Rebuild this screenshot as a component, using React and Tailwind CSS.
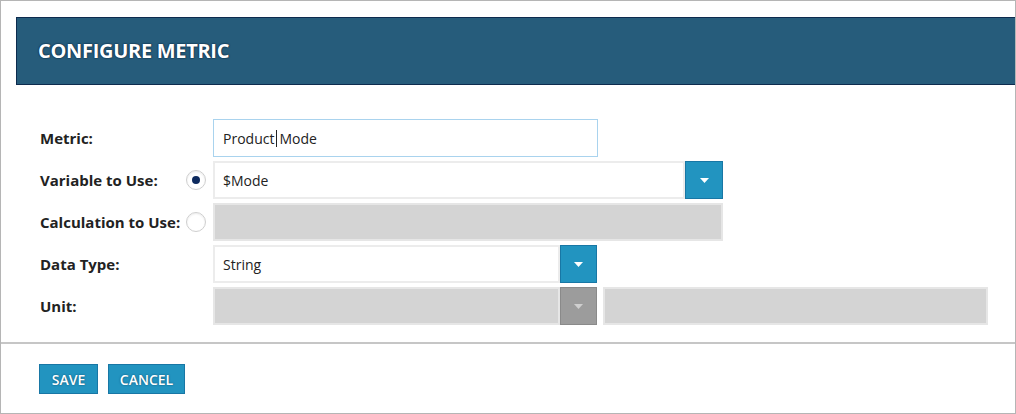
import React from "react";

function Caret({ color = "#ffffff" }) {
  return (
    <svg width="9" height="5" viewBox="0 0 9 5">
      <path d="M0 0 H9 L4.5 5 Z" fill={color} />
    </svg>
  );
}

function Radio({ checked }) {
  return (
    <div className="w-[20px] h-[20px] rounded-full border border-[#cfcfcf] bg-white flex items-center justify-center shadow-[inset_0_1px_2px_rgba(0,0,0,0.08)]">
      {checked && <div className="w-[8px] h-[8px] rounded-full bg-[#0d2a5e]" />}
    </div>
  );
}

function Row({ label, radio, children }) {
  return (
    <div className="flex items-center h-[38px] pl-[39px]">
      <div className="w-[146px] text-[15px] font-bold text-[#222222] leading-none whitespace-nowrap">{label}</div>
      <div className="w-[20px] h-[20px] flex items-center justify-center">
        {radio !== undefined && <Radio checked={radio} />}
      </div>
      <div className="ml-[7px] flex h-full">{children}</div>
    </div>
  );
}

function BlueBtn() {
  return (
    <div className="w-[38px] h-full bg-[#2294c0] border border-[#1877a5] flex items-center justify-center">
      <Caret />
    </div>
  );
}

export default function App() {
  return (
    <div className="w-[1016px] h-[414px] border border-[#b5b5b5] bg-white font-['Open_Sans',sans-serif] box-border">
      <div className="ml-[15px] mt-[16px] h-[68px] border border-r-0 border-[#0d2b4e] bg-[#265c7b] flex items-center pl-[21px]">
        <span className="text-white text-[20px] font-bold tracking-[-0.3px] [text-shadow:0_0_2px_#08223d,0_0_1px_#08223d]">
          CONFIGURE METRIC
        </span>
      </div>

      <div className="mt-[34px] flex flex-col gap-[4px]">
        <Row label="Metric:">
          <div className="w-[385px] h-full border border-[#a9d3ee] bg-white flex items-center pl-[9px] text-[14px] text-[#222]">
            <span>Product</span>
            <span className="inline-block w-px h-[17px] bg-[#222] mx-[2px]" />
            <span>Mode</span>
          </div>
        </Row>
        <Row label="Variable to Use:" radio={true}>
          <div className="w-[472px] h-full border-2 border-[#ececec] bg-white flex items-center pl-[8px] text-[14px] text-[#222]">
            $Mode
          </div>
          <BlueBtn />
        </Row>
        <Row label="Calculation to Use:" radio={false}>
          <div className="w-[510px] h-full border-2 border-[#e6e6e6] bg-[#d4d4d4]" />
        </Row>
        <Row label="Data Type:">
          <div className="w-[347px] h-full border-2 border-[#ececec] bg-white flex items-center pl-[8px] text-[14px] text-[#222]">
            String
          </div>
          <div className="w-[37px] h-full bg-[#2294c0] border border-[#1877a5] flex items-center justify-center">
            <Caret />
          </div>
        </Row>
        <Row label="Unit:">
          <div className="w-[347px] h-full border-2 border-[#e6e6e6] bg-[#d4d4d4]" />
          <div className="w-[37px] h-full bg-[#9c9c9c] border border-[#8a8a8a] flex items-center justify-center">
            <Caret color="#cfcfcf" />
          </div>
          <div className="ml-[6px] w-[385px] h-full border-2 border-[#e6e6e6] bg-[#d4d4d4]" />
        </Row>
      </div>

      <div className="mt-[17px] h-[2px] bg-[#c6c6c6]" />

      <div className="pl-[38px] pt-[20px] flex gap-[10px]">
        <button className="h-[30px] w-[59px] bg-[#2294c0] border border-[#1877a5] text-white text-[14px] font-semibold [text-shadow:0_0_2px_#0b4c6e]">
          SAVE
        </button>
        <button className="h-[30px] w-[77px] bg-[#2294c0] border border-[#1877a5] text-white text-[14px] font-semibold [text-shadow:0_0_2px_#0b4c6e]">
          CANCEL
        </button>
      </div>
    </div>
  );
}
